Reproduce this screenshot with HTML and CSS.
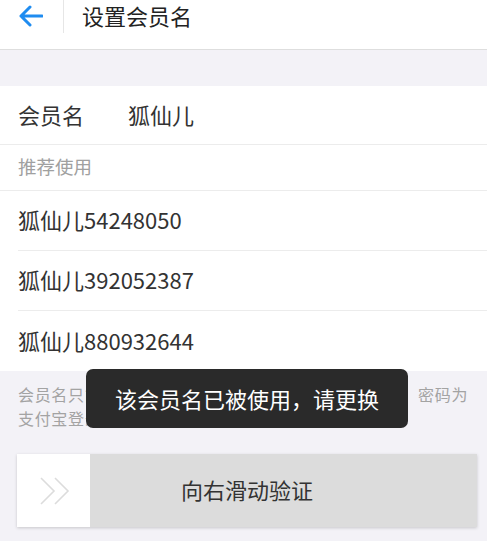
FILE: index.html
```html
<!DOCTYPE html>
<html lang="zh-CN">
<head>
<meta charset="utf-8">
<title>设置会员名</title>
<link rel="stylesheet" href="styles.css">
</head>
<body>
<div class="page">
  <header class="header">
    <div class="back">
      <svg width="24" height="22" viewBox="0 0 24 22">
        <path d="M11 2 L2 11 L11 20 M2 11 H23" fill="none" stroke="#1f8cf0" stroke-width="3" stroke-linecap="round" stroke-linejoin="round"/>
      </svg>
    </div>
    <div class="divider"></div>
    <div class="title">设置会员名</div>
  </header>
  <div class="band"></div>
  <div class="name-row">
    <span class="label">会员名</span>
    <span class="value">狐仙儿</span>
  </div>
  <div class="section-title">推荐使用</div>
  <ul class="list">
    <li class="item">狐仙儿54248050</li>
    <li class="item">狐仙儿392052387</li>
    <li class="item">狐仙儿880932644</li>
  </ul>
  <div class="footer">
    <p class="note">会员名只能设置一次，设置后可用于淘宝、天猫登录，密码为支付宝登录密码，朋友们也可以通过会员名找到你。</p>
    <div class="slider">
      <div class="handle">
        <svg width="32" height="30" viewBox="0 0 32 30">
          <path d="M2 2 L15 15 L2 28 M16 2 L29 15 L16 28" fill="none" stroke="#dcdcdc" stroke-width="1.6"/>
        </svg>
      </div>
      <span class="slider-text">向右滑动验证</span>
    </div>
  </div>
  <div class="toast">该会员名已被使用，请更换</div>
</div>
</body>
</html>
```

FILE: styles.css
```css
* { box-sizing: border-box; }
html, body {
  margin: 0;
  padding: 0;
  background: #f3f2f7;
  font-family: "Noto Sans CJK SC", "Noto Sans", sans-serif;
  color: #333;
}
.page {
  position: relative;
  width: 487px;
  height: 541px;
  overflow: hidden;
  background: #f3f2f7;
}
.header {
  height: 50px;
  background: #fff;
  border-bottom: 1px solid #dedede;
  display: flex;
  align-items: flex-start;
}
.back {
  width: 63px;
  height: 34px;
  display: flex;
  align-items: center;
  padding-left: 19px;
}
.back svg { display: block; margin-top: -2px; }
.divider {
  width: 1px;
  height: 33px;
  background: #e6e6e6;
}
.title {
  margin-left: 18px;
  margin-top: -2px;
  font-size: 22px;
  line-height: 34px;
  color: #222;
}
.band { height: 36px; }
.name-row {
  height: 59px;
  background: #fff;
  display: flex;
  align-items: center;
  padding-left: 18px;
  padding-bottom: 3px;
  font-size: 22px;
  border-bottom: 1px solid #ececec;
}
.label { width: 110px; color: #333; }
.value { color: #333; }
.section-title {
  height: 46px;
  background: #fff;
  padding-left: 18px;
  font-size: 18.5px;
  line-height: 42px;
  color: #a0a0a0;
  border-bottom: 1px solid #ececec;
}
.list {
  list-style: none;
  margin: 0;
  padding: 0 0 0 18px;
  background: #fff;
}
.item {
  height: 60px;
  display: flex;
  align-items: center;
  padding-bottom: 3px;
  font-size: 22px;
  color: #333;
  border-bottom: 1px solid #ececec;
}
.item:last-child { border-bottom: none; }
.footer { padding: 11px 10px 0 17px; }
.note {
  margin: 0 7px 0 1px;
  font-size: 16px;
  letter-spacing: 0.67px;
  line-height: 24px;
  color: #a3a3a3;
}
.slider {
  position: relative;
  margin-top: 24px;
  height: 73px;
  background: #dcdcdc;
  box-shadow: 0 1px 3px rgba(0,0,0,0.18);
  display: flex;
  align-items: center;
  justify-content: center;
}
.handle {
  position: absolute;
  left: 0;
  top: 0;
  width: 73px;
  height: 73px;
  background: #fff;
  display: flex;
  align-items: center;
  justify-content: center;
}
.handle svg { display: block; margin-left: 2px; }
.slider-text {
  font-size: 22px;
  color: #333;
  margin-bottom: 3px;
}
.toast {
  position: absolute;
  left: 86px;
  top: 369px;
  width: 322px;
  height: 59px;
  background: #2a2a2a;
  border-radius: 7px;
  color: #fff;
  font-size: 22px;
  padding-bottom: 2px;
  display: flex;
  align-items: center;
  justify-content: center;
}
```
